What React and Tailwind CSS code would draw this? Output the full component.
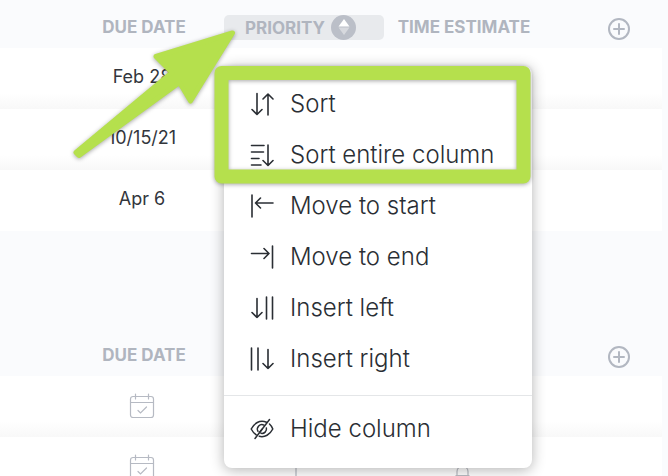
import React from "react";

const groups = [
	{
		id: "first",
		active: true,
		rows: [{ due: "Feb 28" }, { due: "10/15/21" }, { due: "Apr 6" }],
	},
	{
		id: "second",
		active: false,
		rows: [{ due: null }, { due: null, priority: true, estimate: true }],
	},
];

const menuItems = [
	{
		label: "Sort",
		lines: "M7 1.5V22M2 17.5l5 5 5-5M18 23V2.5M13 7l5-5 5 5",
	},
	{
		label: "Sort entire column",
		lines: "M1.5 2.5h12.5M1.5 9h12M1.5 15.5h7.5M1.5 22h9.5M18 2v20M13 17.5l5 5 5-5",
	},
	{ label: "Move to start", lines: "M2 1v22M23 9H5.5M10.5 4l-5 5 5 5" },
	{ label: "Move to end", lines: "M22.5 1v22M1.5 8.5H19M14 3.5l5 5-5 5" },
	{ label: "Insert left", lines: "M7 2.5v19M2 16.5l5 5 5-5M16.5 1v22M22.5 1v22" },
	{ label: "Insert right", lines: "M1.5 1v22M8 1v22M18 2.5v19M13 16.5l5 5 5-5" },
];

function PlusCircle() {
	return (
		<svg className="size-6" viewBox="0 0 24 24" fill="none" stroke="#b2b7c1" strokeWidth="2">
			<circle cx="12" cy="12" r="10" />
			<path d="M12 7v10M7 12h10" strokeLinecap="round" />
		</svg>
	);
}

function SortBadge() {
	return (
		<svg className="size-[25px]" viewBox="0 0 25 25">
			<circle cx="12.5" cy="12.5" r="12.5" fill="#bbbfc8" />
			<path d="M13 4l5.500 7.500h-11z" fill="#fff" />
			<path d="M13 20l5.500-7.500h-11z" fill="#d7d9de" />
		</svg>
	);
}

function CalendarIcon() {
	return (
		<svg
			className="inline size-[26px]"
			viewBox="0 0 26 26"
			fill="none"
			stroke="#b6bac3"
			strokeWidth="1.2"
			strokeLinecap="round"
		>
			<rect x="1.5" y="3.5" width="23" height="21" rx="2.5" />
			<path d="M1.5 9.5h23M6.5 1v5M19.5 1v5" />
			<path d="M9 17.5l2.5 2.5 6-6" />
		</svg>
	);
}

function FlagIcon() {
	return (
		<svg className="inline size-5" viewBox="0 0 20 20" fill="none" stroke="#c4c7ce" strokeWidth="1.5">
			<path d="M2 20V0h15l-3 4 3 4H2" />
		</svg>
	);
}

function HourglassIcon() {
	return (
		<svg className="inline size-5" viewBox="0 0 20 20" fill="none" stroke="#b9bcc3" strokeWidth="1.2">
			<path d="M3 16v-3.500a5.500 5.500 0 0 1 11 0V16M1.500 16.500h14" />
		</svg>
	);
}

function HideIcon() {
	return (
		<svg className="size-6" viewBox="0 0 24 24" fill="none" stroke="#2a2e34" strokeWidth="1.5" strokeLinecap="round">
			<path d="M16.500 5.200C9.500 2.500 4 6.500 1.200 12c1.300 2.500 3 4.500 5 5.900" />
			<path d="M19.500 7c1.400 1.200 2.500 3 3.300 5-2.800 5.500-8 8.800-13.600 7.300" />
			<path d="M14 8.200a4.500 4.500 0 0 0-6 6.200M16.400 11a4.500 4.500 0 0 1-5.400 5.300M12 12.200l-2.500 3.300" />
			<path d="M19.500 2.500L5 21.500" />
		</svg>
	);
}

function ColumnMenu() {
	const item =
		"flex h-[51px] w-full items-center gap-4 pl-[26px] text-left text-2xl font-light text-[#2a2e34]";

	return (
		<div className="absolute left-0 top-full z-10 w-[308px] rounded-lg bg-white pb-3.5 pt-3 shadow-[0_2px_14px_rgba(0,0,0,0.3)]">
			{menuItems.map(({ label, lines }) => (
				<button key={label} type="button" className={item}>
					<svg
						className="size-6 shrink-0"
						viewBox="0 0 24 24"
						fill="none"
						stroke="#2a2e34"
						strokeWidth="1.6"
						strokeLinecap="round"
						strokeLinejoin="round"
					>
						<path d={lines} />
					</svg>
					{label}
				</button>
			))}
			<hr className="mb-[7px] mt-[11px] border-[#e4e6e8]" />
			<button type="button" className={item}>
				<HideIcon />
				Hide column
			</button>
		</div>
	);
}

function TaskGroup({ group }) {
	return (
		<table className="w-full table-fixed border-collapse text-center">
			<colgroup>
				<col className="w-[60px]" />
				<col className="w-[164px]" />
				<col className="w-40" />
				<col className="w-40" />
				<col />
			</colgroup>
			<thead className="text-[17px] leading-6 font-semibold text-[#b0b5bf]">
				<tr className="h-12 align-top">
					<td />
					<th className="pl-1 pt-[15px]">Due date</th>
					<th className="relative pt-[15px]">
						{group.active && (
							<>
								<button
									type="button"
									className="flex h-[25px] w-full items-center gap-1.5 rounded-[5px] bg-[#e8eaed] pl-[21px] uppercase"
								>
									Priority
									<SortBadge />
								</button>
								<div className="absolute left-0 top-[66px] normal-case">
									<ColumnMenu />
								</div>
							</>
						)}
					</th>
					<th className="whitespace-nowrap pt-[15px]">{group.active && "Time estimate"}</th>
					<th className="pr-[31px] pt-[17px]">
						<button type="button" aria-label="Add column" className="ml-auto block">
							<PlusCircle />
						</button>
					</th>
				</tr>
			</thead>
			<tbody className="text-lg text-[#33363c]">
				{group.rows.map((row, index) => (
					<tr key={index} className="h-[61px] bg-linear-to-b from-white from-75% to-[#f8f8f8] last:to-white">
						<td />
						<td className="pb-1">{row.due || <CalendarIcon />}</td>
						<td>{row.priority && <FlagIcon />}</td>
						<td>{row.estimate && <HourglassIcon />}</td>
						<td />
					</tr>
				))}
			</tbody>
		</table>
	);
}

// Green arrow and frame drawn on top of the menu
function Callout() {
	return (
		<svg
			className="pointer-events-none absolute left-0 top-0 z-20 drop-shadow-[0_1px_2px_rgba(0,0,0,0.35)]"
			width="540"
			height="200"
			fill="none"
			stroke="#b5e04d"
			strokeLinejoin="round"
		>
			<path
				d="M232.5 33L156 56.500 172 72.500 76 152.500 79 155.500 179.500 82.500 190.500 101z"
				fill="#b5e04d"
				strokeWidth="5"
			/>
			<rect x="221.5" y="73" width="302" height="103.5" strokeWidth="14" />
		</svg>
	);
}

function App() {
	return (
		<main className="relative h-screen overflow-hidden bg-[#fafbfd] pr-1.5 font-['Inter',sans-serif] [&_th]:uppercase">
			<div className="flex flex-col gap-[97px]">
				{groups.map((group) => (
					<TaskGroup key={group.id} group={group} />
				))}
			</div>
			<Callout />
		</main>
	);
}

export default App;
